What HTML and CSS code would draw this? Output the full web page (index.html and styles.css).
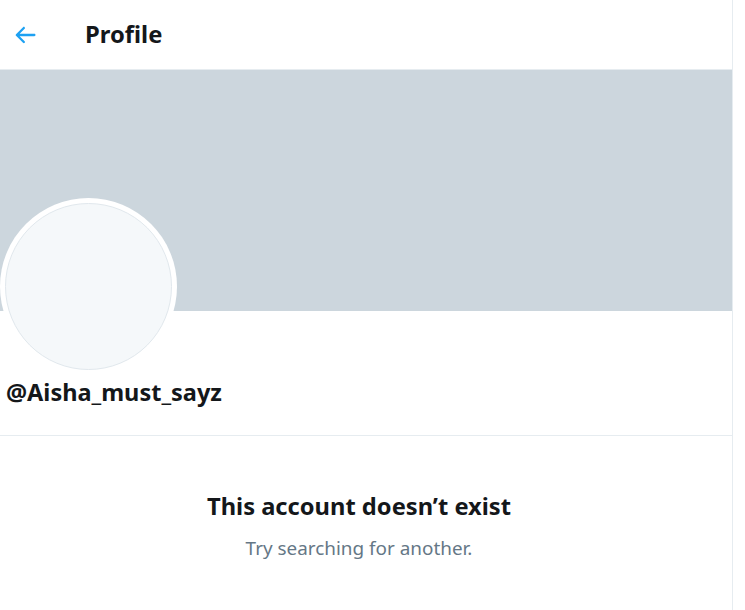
FILE: index.html
```html
<!DOCTYPE html>
<html>
<head>
<meta charset="utf-8">
<link rel="stylesheet" href="styles.css">
</head>
<body>
<div class="column">
  <header class="topbar">
    <a class="back" aria-label="Back">
      <svg viewBox="0 0 24 24" width="28" height="28"><path d="M20 11H7.414l4.293-4.293c.39-.39.39-1.023 0-1.414s-1.023-.39-1.414 0l-6 6c-.39.39-.39 1.023 0 1.414l6 6c.195.195.45.293.707.293s.512-.098.707-.293c.39-.39.39-1.023 0-1.414L7.414 13H20c.553 0 1-.447 1-1s-.447-1-1-1z"/></svg>
    </a>
    <h1 class="title">Profile</h1>
  </header>
  <div class="banner"></div>
  <div class="profile">
    <div class="avatar"><div class="avatar-inner"></div></div>
    <div class="handle">@Aisha_must_sayz</div>
  </div>
  <div class="empty">
    <div class="empty-title">This account doesn’t exist</div>
    <div class="empty-sub">Try searching for another.</div>
  </div>
</div>
</body>
</html>
```
FILE: styles.css
```css
html, body {
  margin: 0;
  padding: 0;
  background: #fff;
}
body {
  font-family: "Noto Sans", "Open Sans", sans-serif;
  color: #14171a;
  overflow: hidden;
}
.column {
  width: 732px;
  height: 610px;
  border-right: 1px solid #e6ecf0;
}
.topbar {
  height: 69px;
  border-bottom: 1px solid #e6ecf0;
  display: flex;
  align-items: center;
  padding-left: 11px;
  box-sizing: content-box;
}
.back {
  display: flex;
  width: 28px;
  height: 28px;
  fill: #1da1f2;
}
.title {
  margin: -2px 0 0 46px;
  font-size: 23.8px;
  font-weight: 700;
  line-height: 30px;
}
.banner {
  height: 241px;
  background: #ccd6dd;
}
.profile {
  position: relative;
  height: 124px;
  border-bottom: 1px solid #e6ecf0;
}
.avatar {
  position: absolute;
  left: 0;
  top: -113px;
  width: 177px;
  height: 177px;
  border-radius: 50%;
  background: #fff;
  display: flex;
  align-items: center;
  justify-content: center;
}
.avatar-inner {
  width: 165px;
  height: 165px;
  border-radius: 50%;
  background: #f5f8fa;
  border: 1px solid #e1e8ed;
}
.handle {
  position: absolute;
  left: 6px;
  top: 65px;
  font-size: 23.5px;
  font-weight: 700;
  line-height: 32px;
}
.empty {
  padding: 54px 14px 0 0;
  text-align: center;
}
.empty-title {
  font-size: 23.7px;
  font-weight: 700;
  line-height: 32px;
}
.empty-sub {
  margin-top: 13px;
  font-size: 18.9px;
  line-height: 26px;
  color: #657786;
}
```
